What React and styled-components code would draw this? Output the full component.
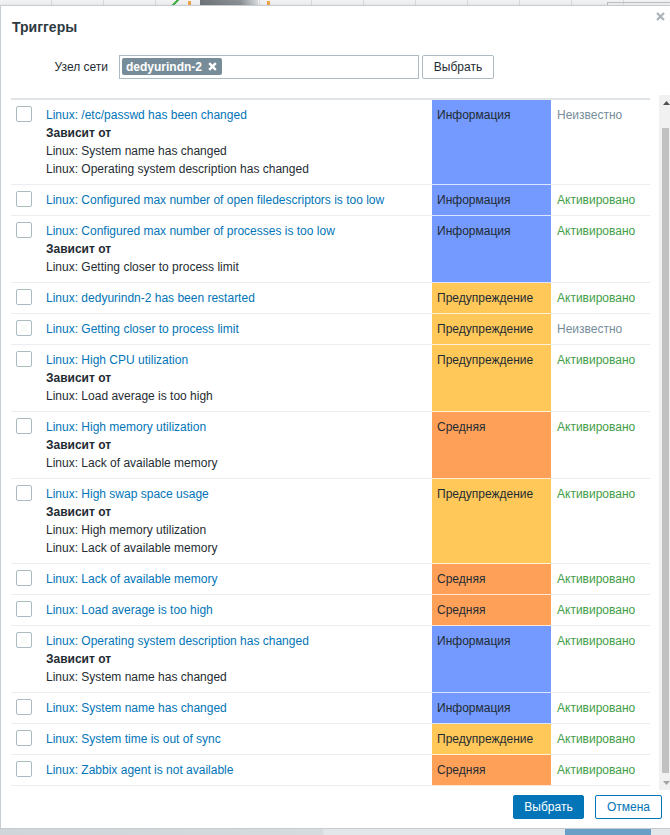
import React from 'react';
import styled, { createGlobalStyle } from 'styled-components';

const GlobalStyle = createGlobalStyle`
  html, body {
    margin: 0;
    padding: 0;
    background: #f0f0f0;
    overflow: hidden;
  }
  body {
    font-family: "Liberation Sans", Arial, sans-serif;
    font-size: 12px;
    color: #1f2c33;
  }
`;

const SEVERITY = {
  info: { label: 'Информация', bg: '#7499ff' },
  warning: { label: 'Предупреждение', bg: '#ffc859' },
  average: { label: 'Средняя', bg: '#ffa059' },
};

const STATUS = {
  enabled: { label: 'Активировано', color: '#429e47' },
  unknown: { label: 'Неизвестно', color: '#768d99' },
};

const triggers = [
  {
    name: 'Linux: /etc/passwd has been changed',
    deps: ['Linux: System name has changed', 'Linux: Operating system description has changed'],
    severity: 'info',
    status: 'unknown',
  },
  { name: 'Linux: Configured max number of open filedescriptors is too low', severity: 'info', status: 'enabled' },
  {
    name: 'Linux: Configured max number of processes is too low',
    deps: ['Linux: Getting closer to process limit'],
    severity: 'info',
    status: 'enabled',
  },
  { name: 'Linux: dedyurindn-2 has been restarted', severity: 'warning', status: 'enabled' },
  { name: 'Linux: Getting closer to process limit', severity: 'warning', status: 'unknown' },
  {
    name: 'Linux: High CPU utilization',
    deps: ['Linux: Load average is too high'],
    severity: 'warning',
    status: 'enabled',
  },
  {
    name: 'Linux: High memory utilization',
    deps: ['Linux: Lack of available memory'],
    severity: 'average',
    status: 'enabled',
  },
  {
    name: 'Linux: High swap space usage',
    deps: ['Linux: High memory utilization', 'Linux: Lack of available memory'],
    severity: 'warning',
    status: 'enabled',
  },
  { name: 'Linux: Lack of available memory', severity: 'average', status: 'enabled' },
  { name: 'Linux: Load average is too high', severity: 'average', status: 'enabled' },
  {
    name: 'Linux: Operating system description has changed',
    deps: ['Linux: System name has changed'],
    severity: 'info',
    status: 'enabled',
  },
  { name: 'Linux: System name has changed', severity: 'info', status: 'enabled' },
  { name: 'Linux: System time is out of sync', severity: 'warning', status: 'enabled' },
  { name: 'Linux: Zabbix agent is not available', severity: 'average', status: 'enabled' },
];

export default function App() {
  return (
    <Page>
      <GlobalStyle />
      <TopStrip>
        <GreenMark />
        <OrangeMark />
        <DarkBlock />
        <OrangeMark />
        <RightBox />
      </TopStrip>

      <Dialog>
        <Header>
          <Title>Триггеры</Title>
          <CloseBtn aria-label="close">
            <svg width="9" height="9" viewBox="0 0 9 9">
              <path d="M1 1 L8 8 M8 1 L1 8" stroke="#a9b3b9" strokeWidth="2.2" />
            </svg>
          </CloseBtn>
        </Header>

        <FormRow>
          <Label>Узел сети</Label>
          <MultiSelect>
            <Chip>
              dedyurindn-2
              <svg width="9" height="9" viewBox="0 0 9 9">
                <path d="M1.2 1.2 L7.8 7.8 M7.8 1.2 L1.2 7.8" stroke="#fff" strokeWidth="2.4" />
              </svg>
            </Chip>
          </MultiSelect>
          <Button>Выбрать</Button>
        </FormRow>

        <ScrollArea>
          <Table>
            <HeadLine />
            {triggers.map((t) => (
              <Row key={t.name}>
                <Cell>
                  <Checkbox />
                </Cell>
                <Cell>
                  <TriggerLink>{t.name}</TriggerLink>
                  {t.deps && (
                    <>
                      <DepTitle>Зависит от</DepTitle>
                      {t.deps.map((d) => (
                        <div key={d}>{d}</div>
                      ))}
                    </>
                  )}
                </Cell>
                <SeverityCell $bg={SEVERITY[t.severity].bg}>{SEVERITY[t.severity].label}</SeverityCell>
                <StatusCell $color={STATUS[t.status].color}>{STATUS[t.status].label}</StatusCell>
              </Row>
            ))}
          </Table>
          <Scrollbar>
            <ScrollArrow>
              <svg width="7" height="4" viewBox="0 0 7 4">
                <path d="M0 4 L3.5 0 L7 4 Z" fill="#505050" />
              </svg>
            </ScrollArrow>
            <Track>
              <Thumb />
            </Track>
            <ScrollArrow>
              <svg width="7" height="4" viewBox="0 0 7 4">
                <path d="M0 0 L3.5 4 L7 0 Z" fill="#a3a3a3" />
              </svg>
            </ScrollArrow>
          </Scrollbar>
        </ScrollArea>

        <Footer>
          <PrimaryButton>Выбрать</PrimaryButton>
          <OutlineButton>Отмена</OutlineButton>
        </Footer>
      </Dialog>

      <BottomStrip>
        <BlueBlock />
      </BottomStrip>
    </Page>
  );
}

const Page = styled.div`
  width: 670px;
  height: 835px;
  display: flex;
  flex-direction: column;
  overflow: hidden;
`;

const TopStrip = styled.div`
  height: 5px;
  display: flex;
  align-items: stretch;
  padding-left: 172px;
  background-color: #f1f1f1;
  background-image: repeating-linear-gradient(
    to right,
    transparent 0,
    transparent 51px,
    #d9dcde 51px,
    #d9dcde 52px,
    transparent 52px,
    transparent 50px
  );
`;

const GreenMark = styled.span`
  width: 7px;
  background: linear-gradient(135deg, transparent 40%, #47b14b 40%, #47b14b 60%, transparent 60%);
`;

const OrangeMark = styled.span`
  width: 3px;
  margin: 1px 9px 0;
  background: #f0a54a;
`;

const DarkBlock = styled.span`
  width: 58px;
  background: linear-gradient(to right, #6e7478, #8d9296 70%, #d9dcdd);
`;

const RightBox = styled.span`
  margin-left: auto;
  width: 62px;
  margin-top: 2px;
  border-top: 1px solid #b8c1c6;
  border-left: 1px solid #b8c1c6;
`;

const Dialog = styled.div`
  height: 824px;
  box-sizing: border-box;
  background: #fff;
  border: 1px solid #c5cdd2;
  border-right: none;
  display: flex;
  flex-direction: column;
  box-shadow: 0 2px 6px rgba(0, 0, 0, 0.15);
`;

const Header = styled.div`
  display: flex;
  justify-content: space-between;
  align-items: flex-start;
  padding: 12px 5px 0 11px;
`;

const Title = styled.h4`
  margin: 0;
  font-size: 14px;
  line-height: 18px;
  font-weight: bold;
  color: #2e3a41;
`;

const CloseBtn = styled.span`
  display: flex;
  margin-top: -6px;
  padding: 0;
`;

const FormRow = styled.div`
  display: flex;
  align-items: center;
  margin-top: 19px;
  height: 24px;
`;

const Label = styled.label`
  width: 107px;
  text-align: right;
  margin-right: 11px;
  color: #1f2c33;
`;

const MultiSelect = styled.div`
  width: 300px;
  height: 24px;
  box-sizing: border-box;
  border: 1px solid #acbbc2;
  padding: 2px;
  display: flex;
  align-items: flex-start;
`;

const Chip = styled.span`
  display: inline-flex;
  align-items: center;
  gap: 6px;
  height: 17px;
  padding: 0 5px 0 4px;
  border-radius: 2px;
  background: #768d99;
  color: #fff;
  font-weight: bold;
  font-size: 12px;
`;

const Button = styled.button`
  margin-left: 3px;
  width: 72px;
  height: 24px;
  background: #fff;
  border: 1px solid #acbbc2;
  border-radius: 2px;
  font-family: inherit;
  font-size: 12px;
  color: #1f2c33;
  padding: 0;
`;

const ScrollArea = styled.div`
  margin-top: 16px;
  margin-left: 10px;
  height: 695px;
  display: flex;
  overflow: hidden;
`;

const Table = styled.div`
  width: 639px;
  padding-top: 3px;
  flex-shrink: 0;
`;

const HeadLine = styled.div`
  height: 2px;
  background: #dfe4e7;
`;

const Row = styled.div`
  display: grid;
  grid-template-columns: 30px 391px 119px 1fr;
  line-height: 18px;
`;

const Cell = styled.div`
  padding: 6px 5px;
  border-bottom: 1px solid #ebeef0;
  color: #1f2c33;
`;

const SeverityCell = styled(Cell)`
  background: ${(p) => p.$bg};
  border-bottom-color: rgba(255, 255, 255, 0.75);
`;

const StatusCell = styled(Cell)`
  padding-left: 6px;
  color: ${(p) => p.$color};
`;

const Checkbox = styled.span`
  display: block;
  width: 16px;
  height: 16px;
  box-sizing: border-box;
  border: 1px solid #acbbc2;
  border-radius: 2px;
  background: #fff;
`;

const TriggerLink = styled.a`
  display: block;
  color: #0275b8;
  text-decoration: none;
`;

const DepTitle = styled.div`
  font-weight: bold;
`;

const Scrollbar = styled.div`
  margin-left: auto;
  width: 11px;
  background: #f1f1f1;
  display: flex;
  flex-direction: column;
`;

const ScrollArrow = styled.div`
  height: 15px;
  display: flex;
  align-items: center;
  justify-content: center;
  padding-left: 3px;
`;

const Track = styled.div`
  flex: 1;
  padding: 18px 1px 2px 3px;
`;

const Thumb = styled.div`
  height: 645px;
  background: #c1c1c1;
`;

const Footer = styled.div`
  display: flex;
  justify-content: flex-end;
  gap: 11px;
  padding: 5px 8px 0 0;
`;

const PrimaryButton = styled.button`
  width: 71px;
  height: 24px;
  padding: 0;
  border: 1px solid #0275b8;
  border-radius: 2px;
  background: #0275b8;
  color: #fff;
  font-family: inherit;
  font-size: 12px;
`;

const OutlineButton = styled(PrimaryButton)`
  width: 67px;
  background: #fff;
  color: #0275b8;
`;

const BottomStrip = styled.div`
  height: 6px;
  display: flex;
  background: linear-gradient(to right, #cfd5d8 0, #d6dbde 48%, #e3e7e9 48.5%, #e3e7e9 100%);
`;

const BlueBlock = styled.span`
  margin-left: 565px;
  width: 86px;
  background: #6a9fc5;
`;
